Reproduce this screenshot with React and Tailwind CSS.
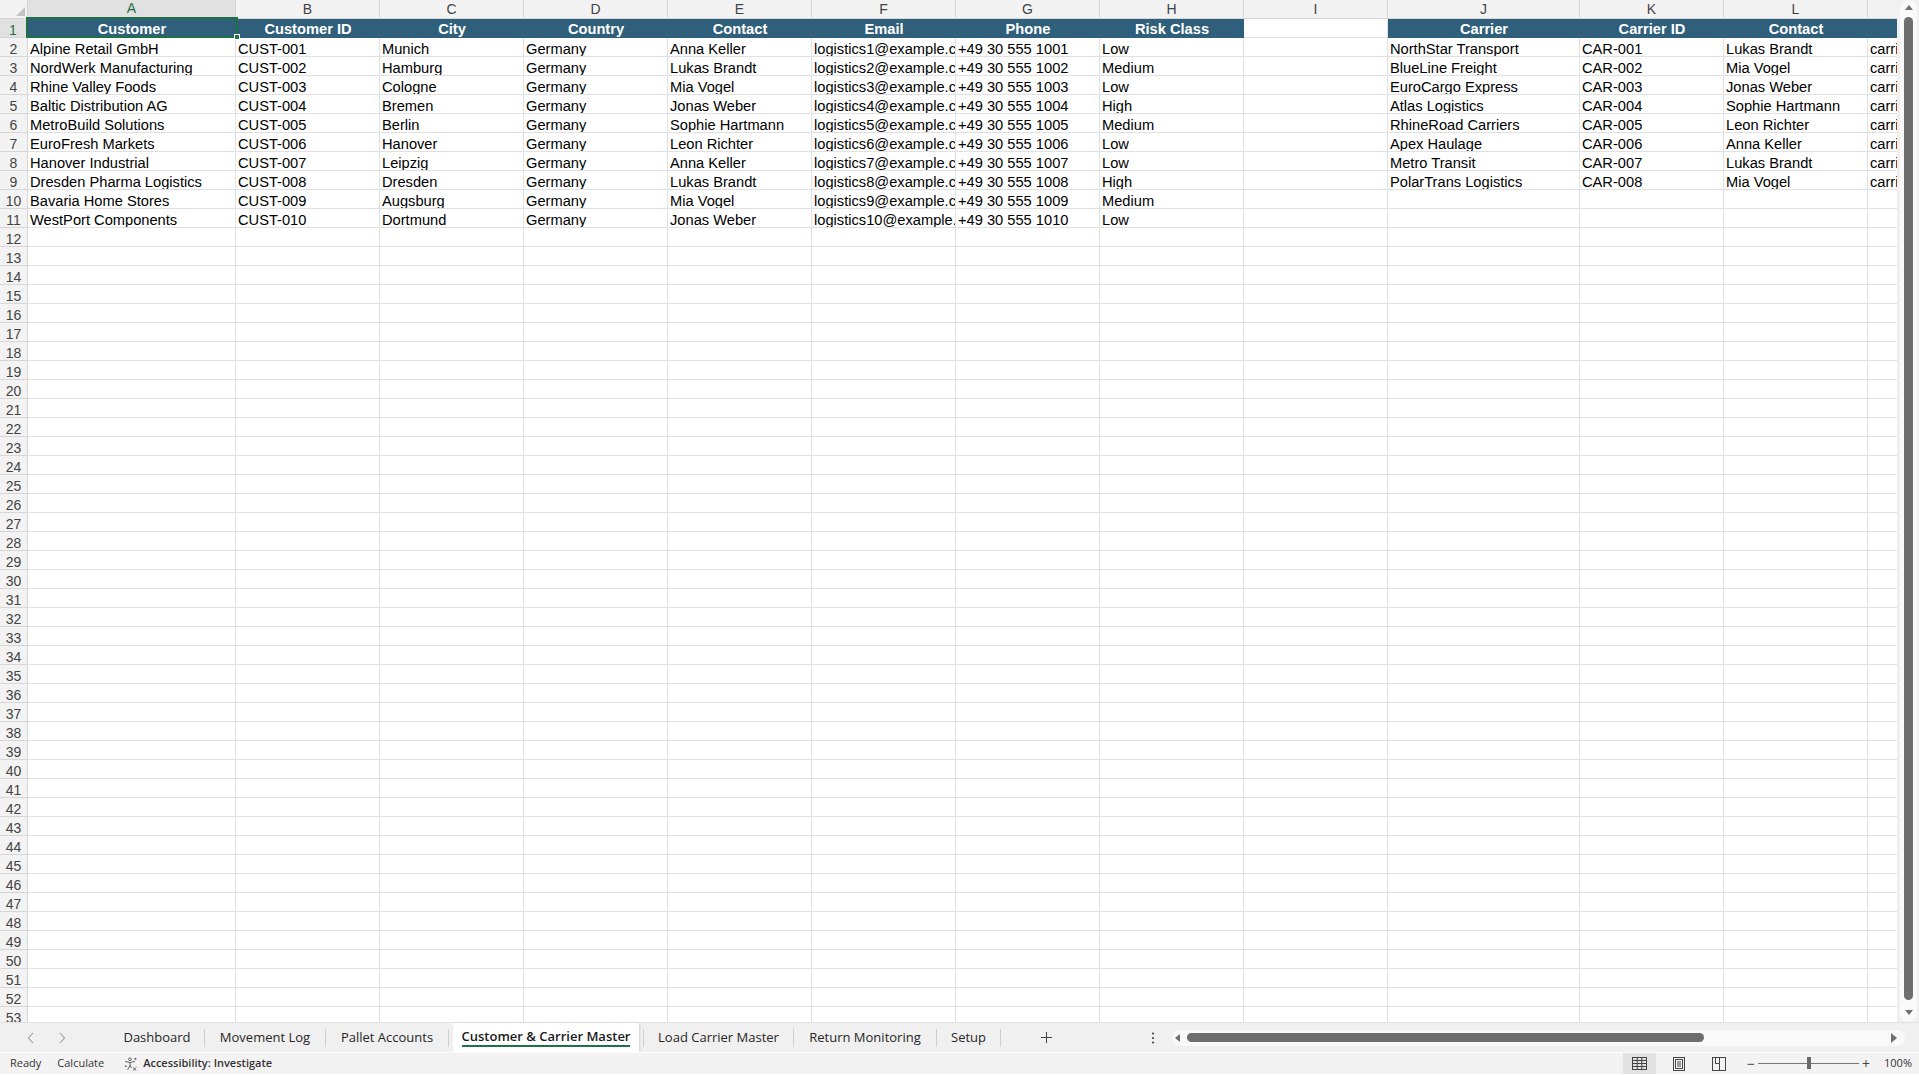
import React from 'react'

/* ── data ────────────────────────────────────────────────────── */
const COLS = [
  { id: 'A', w: 'w-[208px]' },
  { id: 'B', w: 'w-[144px]' },
  { id: 'C', w: 'w-[144px]' },
  { id: 'D', w: 'w-[144px]' },
  { id: 'E', w: 'w-[144px]' },
  { id: 'F', w: 'w-[144px]' },
  { id: 'G', w: 'w-[144px]' },
  { id: 'H', w: 'w-[144px]' },
  { id: 'I', w: 'w-[144px]' },
  { id: 'J', w: 'w-[192px]' },
  { id: 'K', w: 'w-[144px]' },
  { id: 'L', w: 'w-[144px]' },
  { id: 'M', w: 'w-[144px]' },
]

const HEADERS = [
  'Customer', 'Customer ID', 'City', 'Country', 'Contact', 'Email', 'Phone', 'Risk Class',
  null, 'Carrier', 'Carrier ID', 'Contact', 'Email',
]

const customers = [
  ['Alpine Retail GmbH', 'Munich', 'Anna Keller', 'Low'],
  ['NordWerk Manufacturing', 'Hamburg', 'Lukas Brandt', 'Medium'],
  ['Rhine Valley Foods', 'Cologne', 'Mia Vogel', 'Low'],
  ['Baltic Distribution AG', 'Bremen', 'Jonas Weber', 'High'],
  ['MetroBuild Solutions', 'Berlin', 'Sophie Hartmann', 'Medium'],
  ['EuroFresh Markets', 'Hanover', 'Leon Richter', 'Low'],
  ['Hanover Industrial', 'Leipzig', 'Anna Keller', 'Low'],
  ['Dresden Pharma Logistics', 'Dresden', 'Lukas Brandt', 'High'],
  ['Bavaria Home Stores', 'Augsburg', 'Mia Vogel', 'Medium'],
  ['WestPort Components', 'Dortmund', 'Jonas Weber', 'Low'],
]

const carriers = [
  ['NorthStar Transport', 'Lukas Brandt'],
  ['BlueLine Freight', 'Mia Vogel'],
  ['EuroCargo Express', 'Jonas Weber'],
  ['Atlas Logistics', 'Sophie Hartmann'],
  ['RhineRoad Carriers', 'Leon Richter'],
  ['Apex Haulage', 'Anna Keller'],
  ['Metro Transit', 'Lukas Brandt'],
  ['PolarTrans Logistics', 'Mia Vogel'],
]

function rowValues(r) {
  const v = Array(13).fill('')
  const n = r - 1
  const c = customers[r - 2]
  if (c) {
    v[0] = c[0]
    v[1] = `CUST-${String(n).padStart(3, '0')}`
    v[2] = c[1]
    v[3] = 'Germany'
    v[4] = c[2]
    v[5] = `logistics${n}@example.com`
    v[6] = `+49 30 555 ${1000 + n}`
    v[7] = c[3]
  }
  const k = carriers[r - 2]
  if (k) {
    v[9] = k[0]
    v[10] = `CAR-${String(n).padStart(3, '0')}`
    v[11] = k[1]
    v[12] = `carrier${n}@example.com`
  }
  return v
}

const ROWS = Array.from({ length: 53 }, (_, i) => i + 1)

/* ── grid ────────────────────────────────────────────────────── */
function ColumnHeaders() {
  return (
    <div className="flex h-[19px] shrink-0">
      <div className="relative w-[28px] h-full shrink-0 bg-[#f3f3f3] border-r border-b border-[#d6d6d6]">
        <div className="absolute right-[2px] bottom-[2px] w-0 h-0 border-l-[9px] border-l-transparent border-b-[9px] border-b-[#c4c4c4]" />
      </div>
      {COLS.map((c) =>
        c.id === 'A' ? (
          <div key={c.id} className={`${c.w} h-full shrink-0 bg-[#e1e1e1] border-r border-[#d6d6d6] border-b-2 border-b-[#1e7145] flex items-center justify-center text-[14px] text-[#1e7145]`}>
            {c.id}
          </div>
        ) : (
          <div key={c.id} className={`${c.w} h-full shrink-0 bg-[#f3f3f3] border-r border-b border-[#d6d6d6] flex items-center justify-center text-[14px] text-[#444]`}>
            {c.id}
          </div>
        )
      )}
    </div>
  )
}

function HeaderRow() {
  return (
    <div className="flex h-[19px] shrink-0">
      <div className="w-[28px] h-full shrink-0 bg-[#e1e1e1] border-r-2 border-r-[#1e7145] border-b border-b-[#d6d6d6] flex items-end justify-center leading-[14px] text-[14px] text-[#1e7145]">
        1
      </div>
      {COLS.map((c, i) => {
        const label = HEADERS[i]
        if (label === null) {
          return <div key={c.id} className={`${c.w} h-full shrink-0 bg-white border-r border-b border-[#e1e1e1]`} />
        }
        return (
          <div key={c.id} className={`relative ${c.w} h-full shrink-0 bg-[#2f5f7b] border-b border-[#2f5f7b] flex items-end justify-center leading-[15px] text-[14.67px] font-bold text-white whitespace-nowrap`}>
            {label}
            {i === 0 && (
              <div className="absolute z-10 -top-[2px] -left-[2px] -right-[2px] -bottom-[1px] border-2 border-[#1e7145]">
                <div className="absolute -right-[4px] -bottom-[4px] w-[6px] h-[6px] bg-[#1e7145] border border-white" />
              </div>
            )}
          </div>
        )
      })}
    </div>
  )
}

function DataRow({ r }) {
  const vals = rowValues(r)
  return (
    <div className="flex h-[19px] shrink-0">
      <div className="w-[28px] h-full shrink-0 bg-[#f3f3f3] border-r border-b border-[#d6d6d6] flex items-end justify-center leading-[13px] text-[14px] text-[#444]">
        {r}
      </div>
      {COLS.map((c, i) => (
        <div key={c.id} className={`${c.w} h-full shrink-0 border-r border-b border-[#e1e1e1] overflow-hidden whitespace-nowrap pl-[2px] flex items-end leading-[13px] text-[14.67px] text-black`}>
          {vals[i]}
        </div>
      ))}
    </div>
  )
}

function VScroll() {
  return (
    <div className="w-[22px] h-full shrink-0 bg-[#f0f0f0] pl-[3px] pr-[2px]">
      <div className="h-full w-full rounded-full bg-[#fafafa] flex flex-col items-center pt-[5px]">
        <div className="w-0 h-0 border-x-[4px] border-x-transparent border-b-[5px] border-b-[#707070]" />
        <div className="mt-[7px] w-[9px] h-[983px] rounded-full bg-[#6e6e6e]" />
        <div className="mt-[10px] w-0 h-0 border-x-[4px] border-x-transparent border-t-[5px] border-t-[#707070]" />
      </div>
    </div>
  )
}

/* ── sheet tabs ──────────────────────────────────────────────── */
function Sep() {
  return <div className="w-px h-[18px] bg-[#cfcfcf] shrink-0" />
}

function Tab({ label, w }) {
  return (
    <div className={`${w} shrink-0 h-full flex items-center justify-center text-[13px] text-[#262626]`}>
      {label}
    </div>
  )
}

function TabBar() {
  return (
    <div className="h-[30px] shrink-0 flex items-center bg-[#f0f0f0] border-t border-[#e3e3e3] font-['Open_Sans',sans-serif]">
      <div className="w-[110px] shrink-0 h-full flex items-center text-[#9a9a9a]">
        <svg className="ml-[27px]" width="8" height="12" viewBox="0 0 8 12"><path d="M6 1 1.5 6 6 11" fill="none" stroke="currentColor" strokeWidth="1.1" /></svg>
        <svg className="ml-[23px]" width="8" height="12" viewBox="0 0 8 12"><path d="M2 1 6.5 6 2 11" fill="none" stroke="currentColor" strokeWidth="1.1" /></svg>
      </div>
      <Tab label="Dashboard" w="w-[94px]" />
      <Sep />
      <Tab label="Movement Log" w="w-[120px]" />
      <Sep />
      <Tab label="Pallet Accounts" w="w-[122px]" />
      <Sep />
      <div className="ml-[4px] w-[186px] shrink-0 h-full bg-white flex items-center justify-center shadow-[1px_0_2px_rgba(0,0,0,0.12)]">
        <span className="text-[13px] font-semibold text-[#1a1a1a] border-b-2 border-[#1e7145] leading-[18px] -mt-[1px]">
          Customer &amp; Carrier Master
        </span>
      </div>
      <div className="w-[4px] shrink-0" />
      <Sep />
      <Tab label="Load Carrier Master" w="w-[149px]" />
      <Sep />
      <Tab label="Return Monitoring" w="w-[142px]" />
      <Sep />
      <Tab label="Setup" w="w-[63px]" />
      <Sep />
      <div className="w-[91px] shrink-0 flex items-center justify-center text-[#444]">
        <svg width="13" height="13" viewBox="0 0 13 13"><path d="M6.5 1v11M1 6.5h11" stroke="currentColor" strokeWidth="1" /></svg>
      </div>
      <div className="w-[80px] shrink-0 flex items-center pl-[59px] text-[#444]">
        <svg width="4" height="14" viewBox="0 0 4 14"><circle cx="2" cy="2.5" r="1.1" fill="currentColor" /><circle cx="2" cy="7" r="1.1" fill="currentColor" /><circle cx="2" cy="11.5" r="1.1" fill="currentColor" /></svg>
      </div>
      <div className="w-[733px] h-[16px] shrink-0 rounded-full bg-[#f9f9f9] flex items-center">
        <div className="ml-[3px] w-0 h-0 border-y-[4px] border-y-transparent border-r-[5px] border-r-[#707070]" />
        <div className="ml-[7px] w-[517px] h-[9px] rounded-full bg-[#6e6e6e]" />
        <div className="ml-auto mr-[8px] w-0 h-0 border-y-[5px] border-y-transparent border-l-[6px] border-l-[#707070]" />
      </div>
    </div>
  )
}

/* ── status bar ──────────────────────────────────────────────── */
function AccessIcon() {
  return (
    <svg width="14" height="14" viewBox="0 0 14 14" fill="none" stroke="#555" strokeWidth="0.9">
      <circle cx="6" cy="2.3" r="1.4" />
      <path d="M1 4.5 6 5.5 11 4.5M6 5.5v3M6 8.5 3.5 13M6 8.5l1.5 2.5" />
      <path d="M8.8 10.3l3.6 3.4M12.4 10.3 8.8 13.7" />
      <path d="M11.5 0.8v2M10.5 1.8h2M1.8 8.5v1.6M1 9.3h1.6" />
    </svg>
  )
}

function StatusBar() {
  return (
    <div className="h-[22px] shrink-0 flex items-center bg-[#f3f3f3] border-t border-[#fbfbfb] text-[11px] text-[#333] font-['Open_Sans',sans-serif]">
      <span className="ml-[10px]">Ready</span>
      <span className="ml-[16px]">Calculate</span>
      <span className="ml-[20px] flex items-center"><AccessIcon /></span>
      <span className="ml-[5px] font-semibold">Accessibility: Investigate</span>
      <div className="ml-auto flex items-center h-full">
        <div className="w-[33px] h-full bg-[#e2e2e2] flex items-center justify-center">
          <svg width="15" height="13" viewBox="0 0 15 13" fill="none" stroke="#444" strokeWidth="1">
            <rect x="0.5" y="0.5" width="14" height="12" />
            <path d="M5.2 0.5v12M9.8 0.5v12M0.5 3.5h14M0.5 6.5h14M0.5 9.5h14" />
          </svg>
        </div>
        <div className="w-[40px] flex items-center justify-center ml-[3px]">
          <svg width="12" height="14" viewBox="0 0 12 14" fill="none" stroke="#444" strokeWidth="1">
            <rect x="0.5" y="0.5" width="11" height="13" />
            <rect x="2.5" y="2.5" width="7" height="9" />
            <path d="M4 5h4M4 7h4M4 9h4" />
          </svg>
        </div>
        <div className="w-[40px] flex items-center justify-center">
          <svg width="14" height="14" viewBox="0 0 14 14" fill="none" stroke="#444" strokeWidth="1">
            <rect x="0.5" y="0.5" width="13" height="13" />
            <path d="M3.5 0.5v6h4v-6M7.5 6.5v7" />
          </svg>
        </div>
        <span className="ml-[8px] text-[14px] leading-none text-[#444]">−</span>
        <div className="ml-[3px] relative w-[101px] h-px bg-[#777]">
          <div className="absolute left-[49px] -top-[6px] w-[4px] h-[12px] bg-[#6b6b6b]" />
        </div>
        <span className="ml-[3px] text-[14px] leading-none text-[#444]">+</span>
        <span className="ml-[14px] mr-[7px] text-[11px] text-[#333]">100%</span>
      </div>
    </div>
  )
}

/* ── App ─────────────────────────────────────────────────────── */
export default function App() {
  return (
    <div className="w-[1919px] h-[1075px] flex flex-col bg-white overflow-hidden font-['Liberation_Sans',Arial,sans-serif]">
      <div className="flex h-[1022px] shrink-0">
        <div className="w-[1897px] h-full shrink-0 overflow-hidden flex flex-col">
          <ColumnHeaders />
          <HeaderRow />
          {ROWS.slice(1).map((r) => <DataRow key={r} r={r} />)}
        </div>
        <VScroll />
      </div>
      <TabBar />
      <StatusBar />
    </div>
  )
}
